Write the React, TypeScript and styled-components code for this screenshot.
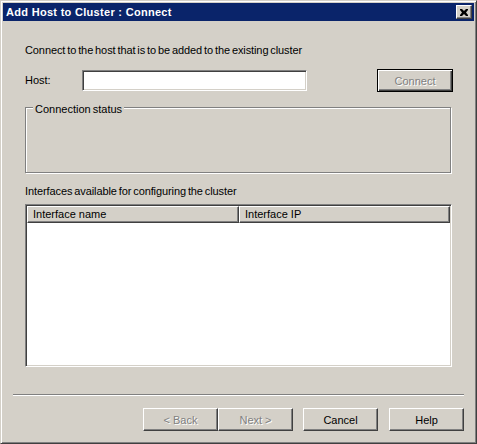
import React from "react";
import styled, { createGlobalStyle } from "styled-components";

const Global = createGlobalStyle`
  html, body { margin: 0; padding: 0; background: #d4d0c8; }
  body { font-family: "Liberation Sans", Arial, sans-serif; font-size: 11px; color: #000; }
  * { box-sizing: border-box; }
`;

const Frame = styled.div`
  width: 477px;
  height: 444px;
  background: #d4d0c8;
  border-style: solid;
  border-width: 1px;
  border-color: #d4d0c8 #404040 #404040 #d4d0c8;
  box-shadow: inset 1px 1px 0 #ffffff, inset -1px -1px 0 #808080;
  padding: 2px;
  display: flex;
  flex-direction: column;
`;

const TitleBar = styled.div`
  height: 18px;
  background: #0a246a;
  display: flex;
  align-items: center;
  justify-content: space-between;
  padding: 0 2px 0 3px;
`;

const TitleText = styled.span`
  color: #fff;
  font-weight: bold;
  font-size: 11px;
  letter-spacing: 0.3px;
  line-height: 13px;
  font-family: "Liberation Sans", Arial, sans-serif;
`;

const CloseBtn = styled.div`
  width: 16px;
  height: 14px;
  background: #d4d0c8;
  border-style: solid;
  border-width: 1px;
  border-color: #ffffff #404040 #404040 #ffffff;
  box-shadow: inset -1px -1px 0 #808080;
  display: flex;
  align-items: center;
  justify-content: center;
`;

const Content = styled.div`
  flex: 1;
  display: flex;
  flex-direction: column;
`;

const Main = styled.div`
  display: flex;
  flex-direction: column;
  padding-left: 22px;
  width: 450px;
`;

const Text = styled.div<{ $mt: number }>`
  margin-top: ${(p) => p.$mt}px;
  line-height: 13px;
  height: 13px;
  white-space: nowrap;
  word-spacing: -1px;
  letter-spacing: -0.1px;
`;

const HostRow = styled.div`
  margin-top: 12px;
  height: 23px;
  display: flex;
  align-items: center;
`;

const HostLabel = styled.span`
  width: 57px;
  line-height: 13px;
`;

const Input = styled.div`
  width: 225px;
  height: 21px;
  background: #fff;
  border-style: solid;
  border-width: 1px;
  border-color: #808080 #ffffff #ffffff #808080;
  box-shadow: inset 1px 1px 0 #404040, inset -1px -1px 0 #d4d0c8;
`;

const Button = styled.div<{ $disabled?: boolean; $default?: boolean; $w?: number }>`
  width: ${(p) => p.$w ?? 75}px;
  height: 23px;
  background: #d4d0c8;
  display: flex;
  align-items: center;
  justify-content: center;
  line-height: 13px;
  padding-top: 1px;
  border-style: solid;
  border-width: 1px;
  border-color: ${(p) =>
    p.$default ? "#000 #000 #000 #000" : "#ffffff #404040 #404040 #ffffff"};
  box-shadow: ${(p) =>
    p.$default
      ? "inset 1px 1px 0 #ffffff, inset -1px -1px 0 #404040, inset -2px -2px 0 #808080"
      : "inset -1px -1px 0 #808080"};
  color: ${(p) => (p.$disabled ? "#808080" : "#000")};
  text-shadow: ${(p) => (p.$disabled ? "1px 1px 0 #ffffff" : "none")};
`;

const ConnectWrap = styled.div`
  margin-left: auto;
`;

const Group = styled.div`
  position: relative;
  margin-top: 15px;
  width: 426px;
  height: 66px;
  border: 1px solid #808080;
  box-shadow: 1px 1px 0 #ffffff, inset 1px 1px 0 #ffffff;
`;

const Legend = styled.span`
  position: absolute;
  top: -5px;
  left: 7px;
  padding: 0 2px;
  background: #d4d0c8;
  line-height: 13px;
  word-spacing: -1px;
`;

const List = styled.div`
  margin-top: 6px;
  width: 427px;
  height: 163px;
  background: #fff;
  border-style: solid;
  border-width: 1px;
  border-color: #808080 #ffffff #ffffff #808080;
  box-shadow: inset 1px 1px 0 #404040, inset -1px -1px 0 #d4d0c8;
  padding: 1px;
  display: flex;
  flex-direction: column;
`;

const Header = styled.div`
  display: flex;
  height: 17px;
`;

const HeaderCell = styled.div<{ $w?: number }>`
  ${(p) => (p.$w ? `width: ${p.$w}px;` : "flex: 1;")}
  height: 17px;
  background: #d4d0c8;
  border-style: solid;
  border-width: 1px;
  border-color: #ffffff #404040 #404040 #ffffff;
  box-shadow: inset -1px -1px 0 #808080;
  padding-left: 5px;
  line-height: 14px;
  white-space: nowrap;
`;

const Separator = styled.div`
  margin: 27px 10px 0 10px;
  height: 2px;
  border-top: 1px solid #808080;
  border-bottom: 1px solid #ffffff;
`;

const Footer = styled.div`
  margin-top: 12px;
  display: flex;
  justify-content: flex-end;
  padding-right: 10px;
`;

const Pair = styled.div`
  display: flex;
  margin-right: 10px;
`;

const Spacer = styled.div<{ $w: number }>`
  width: ${(p) => p.$w}px;
`;

export default function App() {
  return (
    <>
      <Global />
      <Frame>
        <TitleBar>
          <TitleText>Add Host to Cluster : Connect</TitleText>
          <CloseBtn>
            <svg width="8" height="7" viewBox="0 0 8 7">
              <path
                d="M0 0h2l2 2 2-2h2v1L6 3.5 8 6v1H6L4 5 2 7H0V6l2-2.5L0 1z"
                fill="#000"
              />
            </svg>
          </CloseBtn>
        </TitleBar>
        <Content>
          <Main>
            <Text $mt={23}>Connect to the host that is to be added to the existing cluster</Text>
            <HostRow>
              <HostLabel>Host:</HostLabel>
              <Input />
              <ConnectWrap>
                <Button $disabled $default $w={76}>
                  Connect
                </Button>
              </ConnectWrap>
            </HostRow>
            <Group>
              <Legend>Connection status</Legend>
            </Group>
            <Text $mt={12}>Interfaces available for configuring the cluster</Text>
            <List>
              <Header>
                <HeaderCell $w={212}>Interface name</HeaderCell>
                <HeaderCell>Interface IP</HeaderCell>
              </Header>
            </List>
          </Main>
          <Separator />
          <Footer>
            <Pair>
              <Button $disabled>&lt; Back</Button>
              <Button $disabled>Next &gt;</Button>
            </Pair>
            <Button>Cancel</Button>
            <Spacer $w={11} />
            <Button>Help</Button>
          </Footer>
        </Content>
      </Frame>
    </>
  );
}
